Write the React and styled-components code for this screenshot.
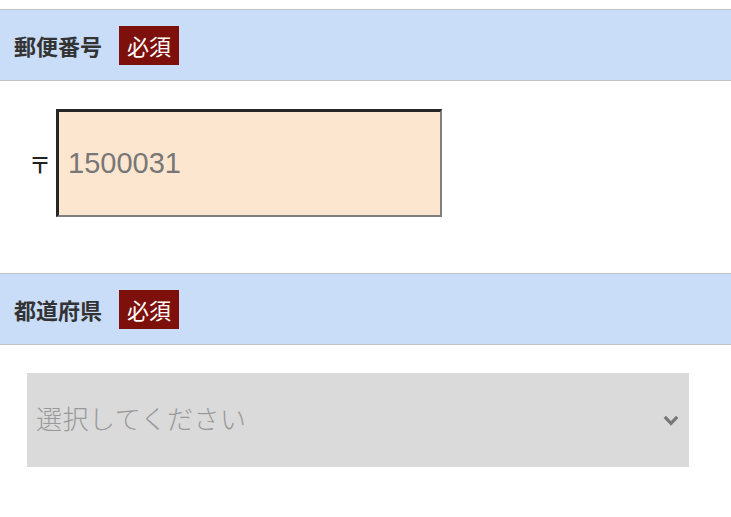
import React from "react";
import styled, { createGlobalStyle } from "styled-components";

const Global = createGlobalStyle`
  html, body { margin: 0; padding: 0; background: #fff; }
  body { font-family: "Noto Sans CJK JP", "Noto Sans", sans-serif; }
`;

const Page = styled.div`
  padding-top: 9px;
  width: 731px;
`;

const SectionHeader = styled.div`
  display: flex;
  align-items: center;
  height: 70px;
  padding-left: 14px;
  background: #c9ddf9;
  border-top: 1px solid #c2c2c2;
  border-bottom: 1px solid #c2c2c2;
`;

const Label = styled.span`
  font-size: 22px;
  font-weight: 700;
  color: #333;
`;

const Badge = styled.span`
  display: inline-flex;
  align-items: center;
  justify-content: center;
  margin-left: 17px;
  width: 60px;
  height: 39px;
  background: #7e100b;
  color: #fff;
  font-size: 22px;
  font-weight: 400;
`;

const FieldRow = styled.div`
  display: flex;
  align-items: center;
  padding: ${(p) => p.$pad};
`;

const PostMark = styled.span`
  font-size: 22px;
  font-weight: 500;
  color: #222;
  width: 26px;
  margin-left: -1px;
  margin-right: 1px;
`;

const ZipInput = styled.div`
  box-sizing: border-box;
  width: 386px;
  height: 108px;
  display: flex;
  align-items: center;
  padding-left: 9px;
  background: #fde6cf;
  border-style: solid;
  border-width: 3px 2px 2px 3px;
  border-color: #262626 #7f7f7f #7f7f7f #262626;
  font-family: "Liberation Sans", Arial, sans-serif;
  font-size: 29px;
  color: #777;
`;

const SelectBox = styled.div`
  box-sizing: border-box;
  width: 662px;
  height: 94px;
  display: flex;
  align-items: center;
  justify-content: space-between;
  padding: 0 10px 6px 9px;
  background: #dadada;
  font-size: 26px;
  font-weight: 300;
  letter-spacing: 0.5px;
  color: #999;
`;

const Chevron = styled.svg`
  margin-top: 6px;
`;

const ChevronIcon = () => (
  <Chevron width="16" height="11" viewBox="0 0 16 11">
    <path d="M1.8 1.8 L8 8.4 L14.2 1.8" fill="none" stroke="#787878" strokeWidth="3.2" />
  </Chevron>
);

export default function App() {
  return (
    <Page>
      <Global />
      <SectionHeader>
        <Label>郵便番号</Label>
        <Badge>必須</Badge>
      </SectionHeader>
      <FieldRow $pad="28px 0 56px 30px">
        <PostMark>〒</PostMark>
        <ZipInput>1500031</ZipInput>
      </FieldRow>
      <SectionHeader>
        <Label>都道府県</Label>
        <Badge>必須</Badge>
      </SectionHeader>
      <FieldRow $pad="28px 0 40px 27px">
        <SelectBox>
          <span>選択してください</span>
          <ChevronIcon />
        </SelectBox>
      </FieldRow>
    </Page>
  );
}
